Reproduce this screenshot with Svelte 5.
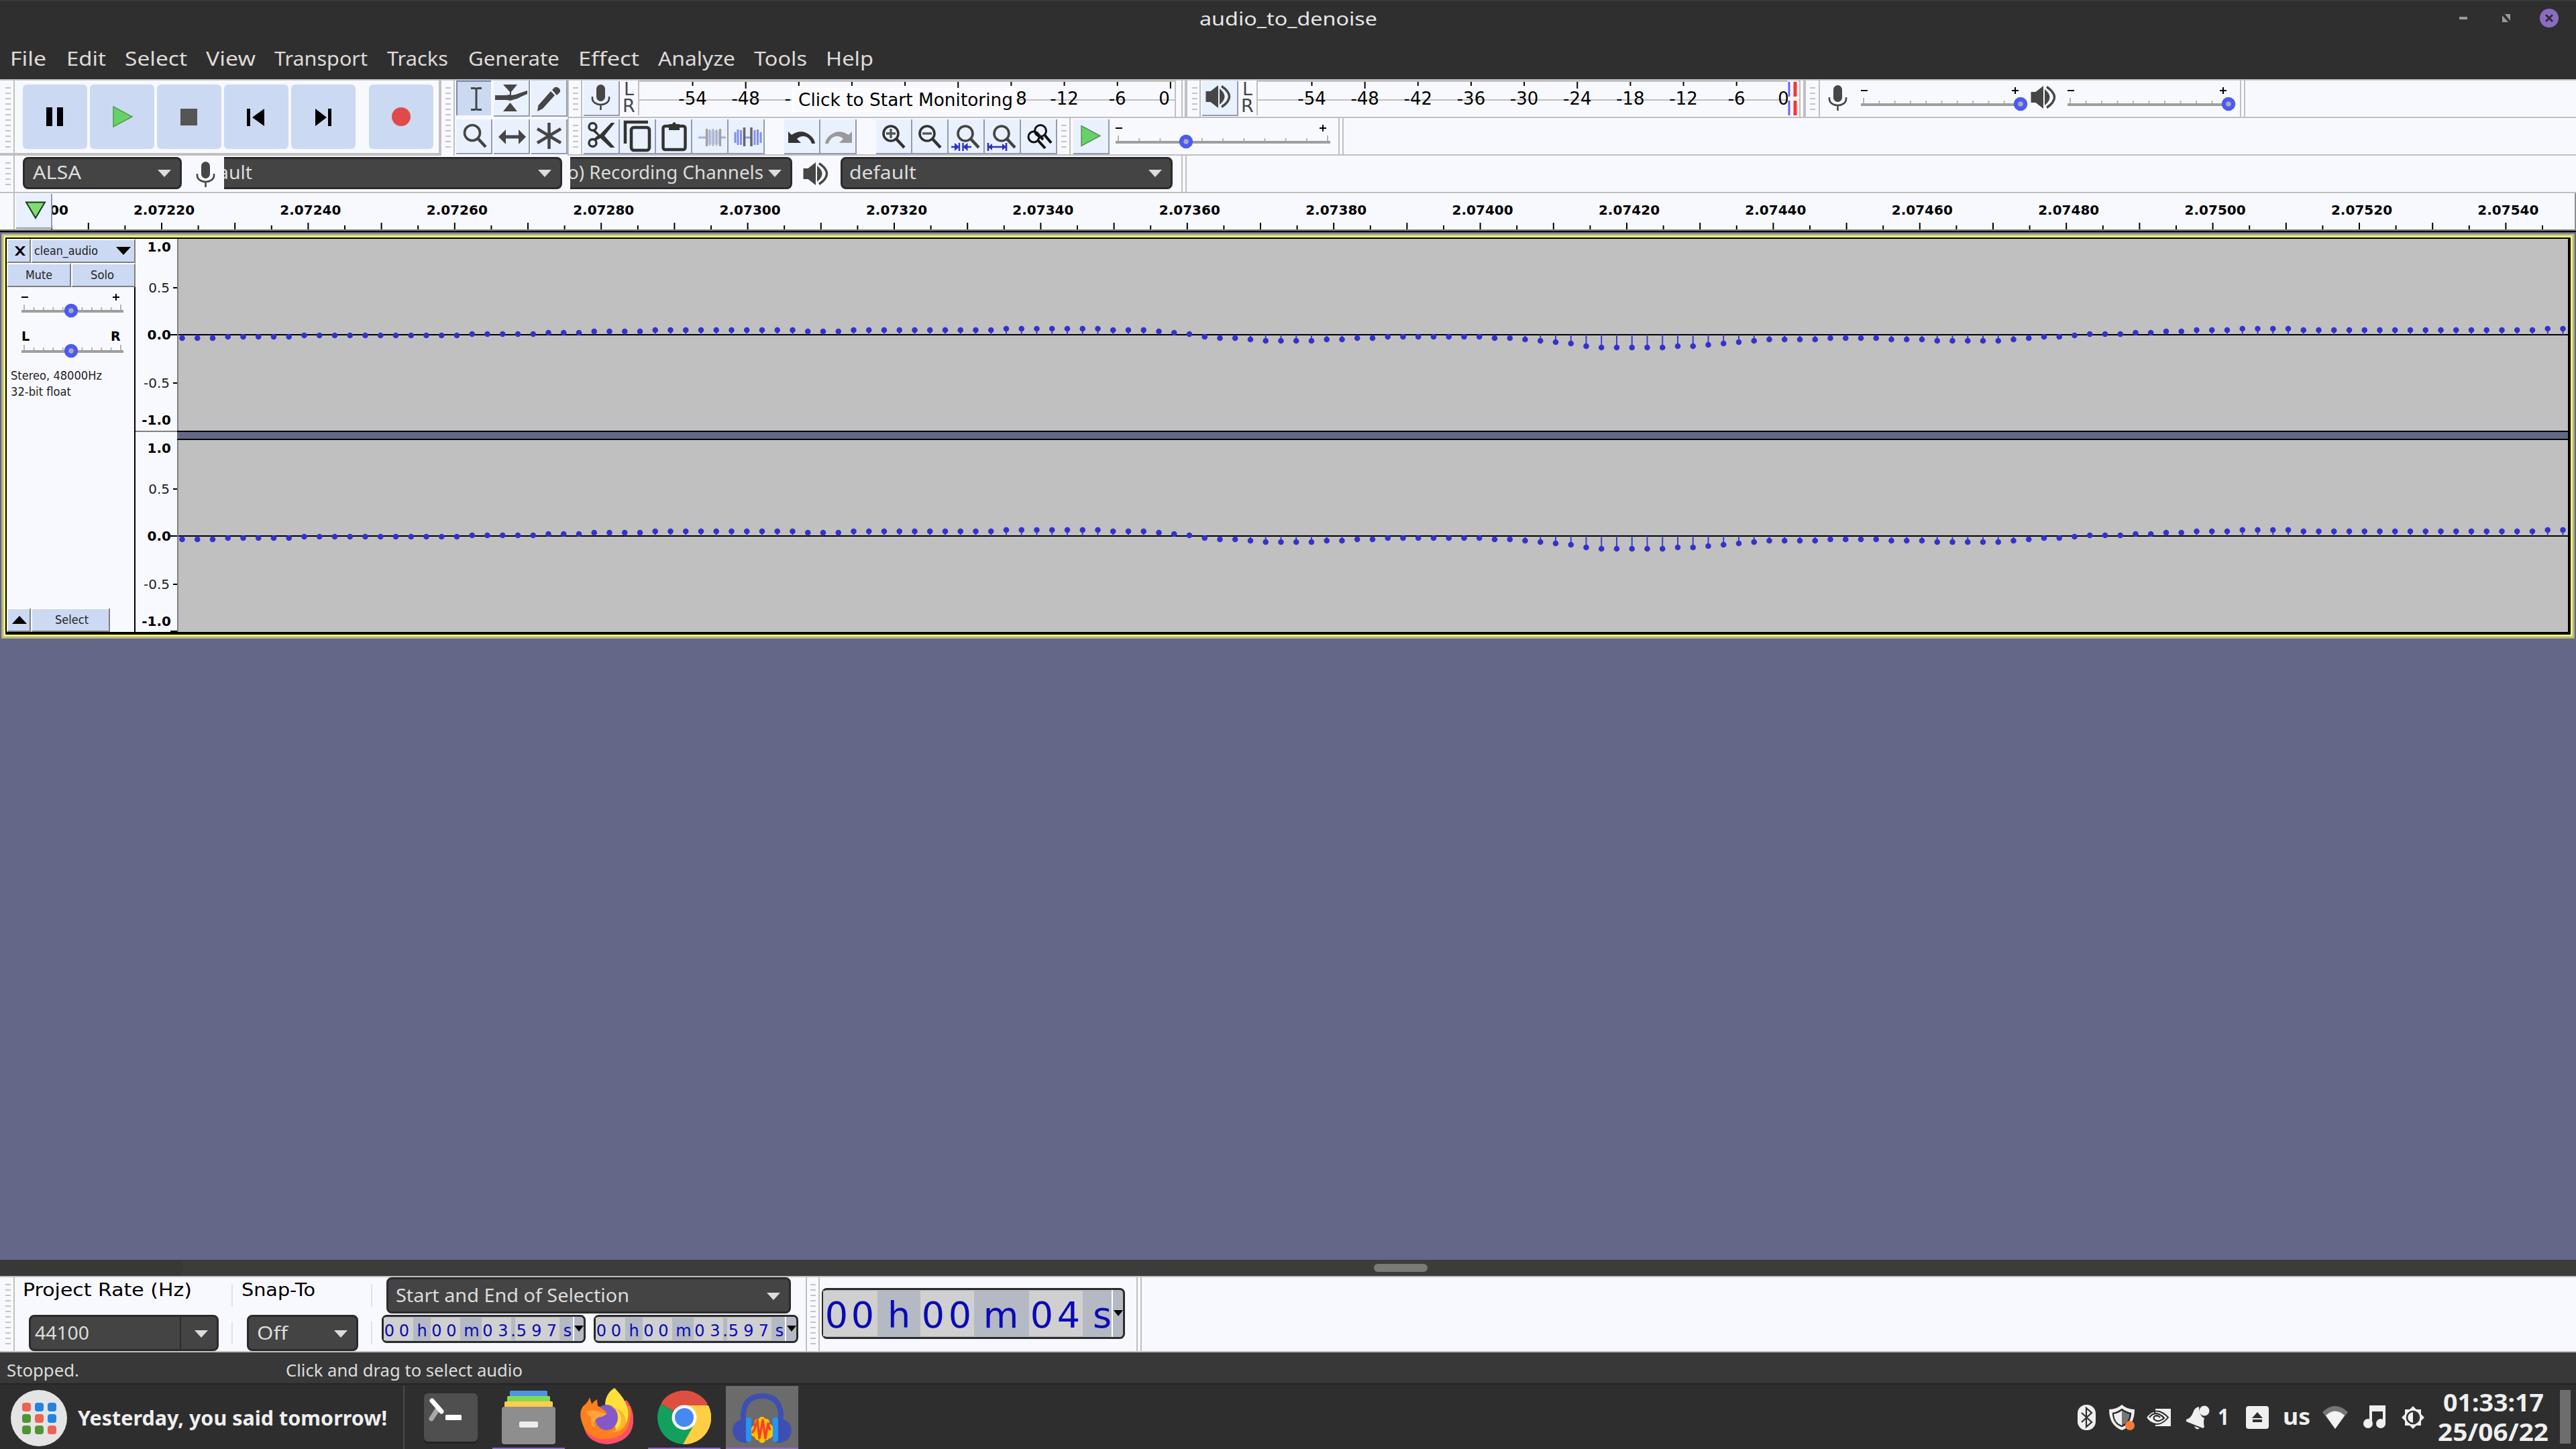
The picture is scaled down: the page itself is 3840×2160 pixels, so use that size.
<script>
  const menus = [
    ['File', 17, 50], ['Edit', 101, 55], ['Select', 188, 89], ['View', 309, 70], ['Transport', 411, 135],
    ['Tracks', 579, 87], ['Generate', 700, 132], ['Effect', 864, 87], ['Analyze', 983, 111],
    ['Tools', 1126, 75], ['Help', 1233, 67]
  ].map(([text, x, w], i, all) => ({ text, w: w + 4, gap: i ? x - all[i - 1][1] - all[i - 1][2] - 4 : 15 }));

  const transport = ['pause', 'play', 'stop', 'prev', 'next', 'record'];
  const toolRows = [['ibeam', 'envelope', 'pencil'], ['zoom', 'shift', 'multi']];
  const editGroups = [
    ['cut', 'copy', 'paste', 'trim', 'silence'],
    ['undo', 'redo'],
    ['zoomin', 'zoomout', 'zoomsel', 'zoomfit', 'zoomtoggle']
  ];
  const db = ['-54', '-48', '-42', '-36', '-30', '-24', '-18', '-12', '-6', '0'];
  // the monitoring hint covers the middle of the recording scale
  const dbCovered = ['-54', '-48', '-', '', '', '', '8', '-12', '-6', '0'];
  const dbShift = { '-': -16.5, '8': 15 };

  const rulerTicks = Array.from({ length: 70 }, (_, i) => ({ x: 77.2 + i * 54.6, long: i % 2 === 1 })).filter((t) => t.x < 3836);
  const rulerLabels = Array.from({ length: 17 }, (_, i) => ({ x: 244.5 + i * 218.4, text: (2.0722 + i * 0.0002).toFixed(5) }));

  // run-length encoded sample heights: [level, count]
  const runs = [
    [17, 3], [16, 5], [15, 11], [14, 5], [13, 3], [12, 4], [11, 10], [12, 3], [11, 10], [10, 7], [11, 3], [12, 1],
    [13, 1], [14, 1], [16, 1], [17, 2], [18, 1], [19, 4], [18, 2], [17, 2], [16, 7], [17, 2], [18, 1], [19, 1],
    [20, 1], [21, 1], [23, 1], [24, 5], [23, 2], [22, 1], [21, 1], [20, 1], [19, 1], [18, 4], [17, 4], [18, 3],
    [19, 5], [18, 1], [17, 1], [16, 2], [15, 1], [14, 3], [13, 2], [12, 2], [11, 3], [10, 4], [11, 16], [10, 2]
  ];
  const samples = runs.flatMap(([v, n]) => Array(n).fill(v)).map((v, i) => ({ x: 5.5 + i * 22.75, y: 114 + v * 2 }));

  const smallTime = [
    ['0', 11.5], ['0', 33.5], ['h', 60], ['0', 82], ['0', 104], ['m', 134], ['0', 158], ['3', 181], ['.', 196],
    ['5', 208.5], ['9', 231], ['7', 253.5], ['s', 277]
  ];
  const smallCells = [[3, 44], [73, 44], [149, 44], [199, 66]];
  const bigTime = [['0', 22], ['0', 61], ['h', 115], ['0', 166], ['0', 206], ['m', 267], ['0', 328], ['4', 368], ['s', 418]];
  const bigCells = [[2, 81], [147, 80], [309, 80]];
  const grid = ['#ec6354', '#2383e2', '#2383e2', '#4f9534', '#ec6354', '#2383e2', '#4f9534', '#4f9534', '#ec6354'];
</script>

{#snippet label(text, w, size, cls)}
  <svg class="label {cls}" width={w} height={size * 1.3}>
    <text x="0" y={size * 1.01} font-size={size} textLength={w} lengthAdjust="spacingAndGlyphs">{text}</text>
  </svg>
{/snippet}

{#snippet grip(w, h, n, x)}
  <svg class="grip" width={w} height={h}>
    {#each Array(n) as _, i}
      <rect {x} y={10 + i * 8} width="8" height="2" fill="#c4c4c4" />
    {/each}
    <rect x={w - 2} y="0" width="2" height={h} fill="#c0c0c0" />
  </svg>
{/snippet}

{#snippet mic()}
  <rect x="19" y="5" width="13" height="25" rx="6.5" fill="#464646" />
  <path d="M13 23v3a12.500 9 0 0 0 25 0v-3M25.500 35v8" fill="none" stroke="#464646" stroke-width="2.600" />
{/snippet}

{#snippet speaker()}
  <path d="M5.500 15h7L24 6v34l-11.500-9h-7z" fill="#464646" />
  <path d="M26 11q15 12 0 24z" fill="#464646" />
  <path d="M29 7.500q23 15.500 0 31" fill="none" stroke="#464646" stroke-width="3.500" />
{/snippet}

{#snippet lens(cx, color)}
  <circle {cx} cy="21" r="11" fill="none" stroke={color} stroke-width="3.600" />
  <path d="M{cx + 8} 29L{cx + 20} 42" stroke={color} stroke-width="4.500" />
{/snippet}

{#snippet icon(name)}
  <svg class="icon" width="54" height="52" viewBox="0 0 54 52">
    {#if name === 'mic'}{@render mic()}
    {:else if name === 'speaker'}{@render speaker()}
    {:else if name === 'ibeam'}
      <path d="M22 11.500h6l2 1.500 2-1.500h6M22 43.500h6l2-1.500 2 1.500h6M30 12v31" fill="none" stroke="#464646" stroke-width="3" />
    {:else if name === 'envelope'}
      <path d="M14 6h21L26 17v5q8-1 15-4l9-3v5l-9 4q-6 4-13 5l-3 1-6-1H2v-7h16l6-1v-4zM24.500 33L35 46H14z" fill="#464646" />
    {:else if name === 'pencil'}
      <path d="M9 46l1.500-9L29 16l6 6-18 20zM31 14l4-4q5-1 8 4v3l-5 5z" fill="#464646" />
    {:else if name === 'zoom'}
      <circle cx="24" cy="20" r="11.500" fill="none" stroke="#464646" stroke-width="3.600" />
      <path d="M32 28l12 13" stroke="#464646" stroke-width="4.500" />
    {:else if name === 'shift'}
      <path d="M7 26l11-11v8.500h19V15l11 11-11 11v-8.500H18V37z" fill="#464646" />
    {:else if name === 'multi'}
      <path d="M26.500 5v39M9 14l35 21M44 14L9 35" stroke="#464646" stroke-width="4.500" />
    {:else if name === 'cut'}
      <circle cx="13.500" cy="11" r="5.500" fill="none" stroke="#333" stroke-width="3.400" />
      <circle cx="13.500" cy="35" r="5.500" fill="none" stroke="#333" stroke-width="3.400" />
      <path d="M16 14l8 9L41 5h5.500L31 24.500 46.500 42H40L25 28l-8 4-2-3 6-5-8-7z" fill="#333" />
    {:else if name === 'copy'}
      <path d="M8 36V4h34" fill="none" stroke="#333" stroke-width="4.500" />
      <rect x="17" y="12" width="27" height="34" rx="4" fill="none" stroke="#333" stroke-width="4.600" />
    {:else if name === 'paste'}
      <rect x="10.500" y="10" width="33" height="35" rx="3" fill="none" stroke="#333" stroke-width="4.400" />
      <path d="M19 7h5q3-6 6 0h5v9H19z" fill="#333" />
    {:else if name === 'trim'}
      <path d="M9 27h12M42 27h8" stroke="#a4b2dc" stroke-width="3" />
      <rect x="23" y="17" width="17" height="20" fill="#ccd3e8" />
      <path d="M26 15v24M31 14v26M36 15v24" stroke="#a9b2cf" stroke-width="2.400" />
      <path d="M21.500 14v26M41.500 14v26" stroke="#a2a2a2" stroke-width="3.400" />
    {:else if name === 'silence'}
      <path d="M24 27h11" stroke="#8a9ae8" stroke-width="3" />
      <path d="M10 19v16M14 15v23M18.500 16v22M39 16v22M43.500 15v23M48 19v16" stroke="#7f8ff0" stroke-width="3" />
      <path d="M23.500 12v28M34 12v28" stroke="#666" stroke-width="3.600" />
    {:else if name === 'undo' || name === 'redo'}
      <g transform={name === 'redo' ? 'translate(53 0) scale(-1 1)' : ''} fill={name === 'redo' ? '#9a9a9a' : '#333'}>
        <path d="M6 18l5 5q15-10 28 1 6 5 7 12h-5q-3-10-12-11-6 0-10 4l6 6H6z" />
      </g>
    {:else if name === 'zoomin'}{@render lens(22, '#333')}<path d="M15 21h14M22 14v14" stroke="#555" stroke-width="3.400" />
    {:else if name === 'zoomout'}{@render lens(22, '#333')}<path d="M15 21h14" stroke="#555" stroke-width="3.400" />
    {:else if name === 'zoomsel'}{@render lens(25, '#444')}
      <path d="M4 41h9M25 41h9M16 35v12M21.500 35v12" stroke="#2d31c4" stroke-width="2.400" /><path d="M9 35l7 6-7 6zM28.500 35l-7 6 7 6z" fill="#2d31c4" />
    {:else if name === 'zoomfit'}{@render lens(25, '#444')}
      <path d="M5 35v12M32 35v12M6 41h25" stroke="#2d31c4" stroke-width="2.600" /><path d="M5 41l6-5v10zM32 41l-6-5v10z" fill="#2d31c4" />
    {:else if name === 'zoomtoggle'}
      <circle cx="29" cy="17" r="8.500" fill="none" stroke="#111" stroke-width="3" />
      <circle cx="19" cy="26" r="8" fill="none" stroke="#111" stroke-width="3" />
      <path d="M35 23l10 12M25 31l11 12M23 20l10 10" stroke="#111" stroke-width="4" />
    {:else if name === 'play'}
      <path d="M12 9.500v30L40 24.500z" fill="#66d266" stroke="#58905a" stroke-width="1.500" />
    {/if}
  </svg>
{/snippet}

{#snippet slider(w, value, marks)}
  <svg class="slider" width={w} height="54">
    {#if marks}
      <text x="0" y="20" class="mark">L</text>
      <text x={w - 19} y="20" class="mark">R</text>
    {:else}
      <path d="M0 15h10M{w - 16} 15h10M{w - 11} 10v10" stroke="#000" stroke-width="2" />
    {/if}
    {#each Array(11) as _, i}
      {@const long = i === 0 || i === 10}
      <rect x={1 + (i * (w - 8)) / 10} y={long ? 26 : 30} width="2" height="8" fill="#fff" />
      <rect x={3 + (i * (w - 8)) / 10} y={long ? 26 : 30} width="2" height="8" fill="#b4b4b4" />
    {/each}
    <rect x="0" y="34" width={w} height="4" fill="#9e9e9e" />
    <circle cx={value} cy="35" r="7" fill="#aab" stroke="#4c5aee" stroke-width="6.500" />
  </svg>
{/snippet}

{#snippet meter(start, w, values)}
  <svg class="meter" width={w} height="54">
    <rect width={w} height="2" fill="#c0c0c0" />
    <rect x="0" y="28" width={w} height="2" fill="#c0c0c0" />
    <rect x="0" y="0" width="2" height="52" fill="#c0c0c0" />
    {#each values as value, i}
      {@const x = start + i * 79.15}
      <rect {x} y="2" width="2" height={[1, 5, 9].includes(i) ? 10 : 6} fill="#000" />
      {#if value}
        <text x={x + (i < 9 ? 1 : 0) + (dbShift[value] ?? 0)} y="36" text-anchor={i < 9 ? 'middle' : 'end'}>{value}</text>
      {/if}
    {/each}
  </svg>
{/snippet}

{#snippet arrow()}
  <svg class="arrow" width="20" height="11"><path d="M0 0h20L10 11z" fill="#dcdcdc" /></svg>
{/snippet}

{#snippet timeBox(w, h, cells, chars, size, base, split)}
  <svg class="time" width={w} height={h}>
    <rect x="1.500" y="1.500" width={w - 3} height={h - 3} rx="6" fill="#b4b9c3" stroke="#2b2b2b" stroke-width="3" />
    {#each cells as [x, cw]}
      <rect {x} y="4" width={cw} height={h - 8} fill="#d0d0d0" />
    {/each}
    <rect x={split} y="3" width="2" height={h - 6} fill="#fff" />
    {#each chars as [c, x]}
      <text {x} y={base} font-size={size} text-anchor="middle">{c}</text>
    {/each}
    <path d="M{w - 17} {h / 2 - 5}h14l-7 9z" fill="#000" />
  </svg>
{/snippet}

<div class="screen">
  <header>
    <div class="titlebar">
      <span></span>
      {@render label('audio_to_denoise', 265, 28, 'title')}
      <svg class="winbtns" width="180" height="54">
        <rect x="6" y="26" width="12" height="4" fill="#9b9b9b" />
        <path d="M70 24v10h9zM74 22h8v10z" fill="#9b9b9b" />
        <circle cx="140" cy="28" r="14" fill="#8c6bc4" />
        <path d="M135 23l10 10M145 23l-10 10" stroke="#2f2f2f" stroke-width="3" />
      </svg>
    </div>
    <nav>
      {#each menus as m}
        <svg width={m.gap} height="2"></svg>{@render label(m.text, m.w, 29, 'menu')}
      {/each}
    </nav>
  </header>

  <section class="dock">
    <div class="band">
      <div class="transport">
        {@render grip(22, 108, 12, 8)}
        {#each transport as t}
          <button class={['tbtn', t]} aria-label={t}>
            <svg width="96" height="96" viewBox="0 0 96 96">
              {#if t === 'pause'}<path d="M35 34h9v28h-9zM51 34h9v28h-9z" />
              {:else if t === 'play'}<path d="M35 33v30l28-15z" fill="#66d266" stroke="#4f9c52" stroke-width="1.500" />
              {:else if t === 'stop'}<path d="M35 36h25v25H35z" fill="#555" />
              {:else if t === 'prev'}<path d="M34 36h5v26h-5zM60 36v26L42 49z" />
              {:else if t === 'next'}<path d="M55 36h5v26h-5zM36 36v26l17-13z" />
              {:else}<circle cx="48" cy="48" r="14" fill="#e14a4a" />{/if}
            </svg>
          </button>
        {/each}
      </div>
      <div class="tools">
        {@render grip(20, 112, 12, 6)}
        <div class="toolgrid">
          {#each toolRows as row}
            {#each row as t}<button class={['ibtn', { on: t === 'ibeam' }]} aria-label={t}>{@render icon(t)}</button>{/each}
          {/each}
        </div>
      </div>
      <div class="rows">
        <div class="row">
          {@render grip(20, 54, 5, 6)}
          <button class="ibtn lone" aria-label="mic">{@render icon('mic')}</button>
          <div class="lr"><span>L</span><span>R</span></div>
          <div class="meterwrap">
            {@render meter(80.5, 800, dbCovered)}
            <div class="tip">{@render label('Click to Start Monitoring', 320, 26, 'tiptext')}</div>
          </div>
          <div class="gap10"></div>
          <div class="bar4"></div>
          {@render grip(20, 54, 5, 7)}
          <button class="ibtn lone" aria-label="speaker">{@render icon('speaker')}</button>
          <div class="lr"><span>L</span><span>R</span></div>
          <div class="meterwrap">
            {@render meter(81.5, 809, db)}
            <svg class="levels" width="16" height="52">
              <path d="M2 2v22M2 30v22" stroke="#6464ff" stroke-width="3" />
              <path d="M11 2v22M11 30v22" stroke="#ff3232" stroke-width="5" />
            </svg>
          </div>
          <div class="gap6"></div>
          <div class="bar4"></div>
          {@render grip(21, 54, 5, 6)}
          <div class="mixicon">{@render icon('mic')}</div>
          {@render slider(241, 238, false)}
          <div class="mixicon second">{@render icon('speaker')}</div>
          {@render slider(243, 240, false)}
          <div class="endcap"></div>
        </div>
        <div class="row edit">
          {@render grip(20, 54, 5, 6)}
          {#each editGroups as group}
            <div class="group">
              {#each group as t}<button class="ibtn" aria-label={t}>{@render icon(t)}</button>{/each}
            </div>
          {/each}
          {@render grip(20, 54, 5, 6)}
          <button class="ibtn playat" aria-label="play at speed">{@render icon('play')}</button>
          {@render slider(320, 105, false)}
          <div class="endcap speed"></div>
        </div>
      </div>
    </div>
    <div class="row devices">
      {@render grip(22, 54, 5, 8)}
      <div class="combo host">{@render label('ALSA', 72, 27, 'light')}{@render arrow()}</div>
      <div class="devicon">{@render icon('mic')}</div>
      <div class="combo recdev">{@render label('ault', 51, 27, 'light')}{@render arrow()}</div>
      <div class="combo channels">{@render label('o) Recording Channels', 292, 27, 'light')}{@render arrow()}</div>
      <div class="devicon spk">{@render icon('speaker')}</div>
      <div class="combo playdev">{@render label('default', 100, 27, 'light')}{@render arrow()}</div>
      <div class="endcap dev"></div>
    </div>
    <div class="timeline">
      <svg width="3838" height="54">
        <rect x="20" y="0" width="2" height="54" fill="#c0c0c0" />
        <text x="74" y="32">00</text>
        {#each rulerLabels as l}<text x={l.x} y="32" text-anchor="middle">{l.text}</text>{/each}
        {#each rulerTicks as t}<rect x={t.x - 1} y={t.long ? 44 : 48} width="2" height="10" />{/each}
        <rect x="24" y="1" width="54" height="52" fill="#949ab4" />
        <rect x="24" y="1" width="52" height="50" fill="#eaf1fe" />
        <path d="M39 13.500h28L53 37z" fill="#7ddd72" stroke="#1c381c" stroke-width="2" />
      </svg>
    </div>
  </section>

  <main>
    <div class="track">
      <aside>
        <div class="prow">
          <button class="pbtn close" aria-label="close track"><svg width="18" height="14"><path d="M1 0h4l4 4.500L13 0h4l-6 7 6 7h-4l-4-4.500L5 14H1l6-7z" /></svg></button>
          <button class="pbtn name">{@render label('clean_audio', 95, 17, 'dj')}<svg width="22" height="12"><path d="M0 0h22L11 12z" /></svg></button>
        </div>
        <div class="prow">
          <button class="pbtn half">{@render label('Mute', 40, 17, 'dj')}</button>
          <button class="pbtn half solo">{@render label('Solo', 35, 17, 'dj')}</button>
        </div>
        <div class="pslider">{@render slider(152, 74, false)}</div>
        <div class="pslider">{@render slider(152, 74, true)}</div>
        <div class="info">
          {@render label('Stereo, 48000Hz', 136, 17, 'dj')}
          {@render label('32-bit float', 90, 17, 'dj')}
        </div>
        <div class="prow foot">
          <button class="pbtn up" aria-label="collapse"><svg width="22" height="12"><path d="M0 12h22L11 0z" /></svg></button>
          <button class="pbtn sel">{@render label('Select', 50, 17, 'dj')}</button>
        </div>
      </aside>
      <div class="channels-col">
        {#each [0, 1] as ch}
          <div class="channel">
            <svg class="vruler" width="64" height="286">
              <text x="53" y="19" class="b">1.0</text>
              <text x="51" y="80">0.5</text>
              <text x="53" y="150" class="b">0.0</text>
              <text x="51" y="222">-0.5</text>
              <text x="53" y="277" class="b">-1.0</text>
              <path d="M56 73h6M52 143h10M56 215h6" stroke="#000" stroke-width="2" />
              {#if ch === 1}<path d="M52 285h10" stroke="#000" stroke-width="2" />{/if}
              <rect x="62" y="0" width="2" height="286" fill="#808080" />
            </svg>
            <svg class="wave" width="3562" height="286">
              <rect y="142" width="3562" height="2" />
              {#each samples as s}
                <path d="M{s.x} 143V{s.y}" stroke="#4040d0" stroke-width="2" />
                <circle cx={s.x} cy={s.y} r="4.3" fill="#3333cc" />
              {/each}
            </svg>
          </div>
          {#if ch === 0}
            <div class="split"><div class="splitleft"></div><div class="splitright"></div></div>
          {/if}
        {/each}
      </div>
    </div>
  </main>

  <div class="scroll"><div class="thumb"></div></div>

  <section class="bottom">
    {@render grip(22, 110, 12, 8)}
    <div class="field rate">
      {@render label('Project Rate (Hz)', 252, 26, 'dark')}
      <div class="combo tall ratebox">{@render label('44100', 81, 27, 'light')}<span class="div"></span>{@render arrow()}</div>
    </div>
    <div class="seps"><i></i><i></i></div>
    <div class="field snap">
      {@render label('Snap-To', 110, 26, 'dark')}
      <div class="combo tall snapbox">{@render label('Off', 46, 27, 'light')}{@render arrow()}</div>
    </div>
    <div class="seps"><i></i><i></i></div>
    <div class="selection">
      <div class="combo tall range">{@render label('Start and End of Selection', 348, 27, 'light')}{@render arrow()}</div>
      <div class="times">
        {@render timeBox(304, 42, smallCells, smallTime, 24, 32, 285)}
        {@render timeBox(305, 42, smallCells, smallTime, 24, 32, 285)}
      </div>
    </div>
    <div class="bar2"></div>
    {@render grip(19, 110, 12, 5)}
    <div class="big">{@render timeBox(452, 76, bigCells, bigTime, 54, 58.500, 432)}</div>
    <div class="endcap tall"></div>
  </section>

  <footer class="status">
    {@render label('Stopped.', 108, 26, 'light')}
    {@render label('Click and drag to select audio', 353, 26, 'light hint')}
  </footer>

  <footer class="panel">
    <svg class="start" width="84" height="84">
      <circle cx="42" cy="42" r="42" fill="#e4e4e4" />
      {#each grid as fill, i}
        <rect x={17 + (i % 3) * 19} y={19 + Math.floor(i / 3) * 17} width="13" height="13" rx="4" {fill} />
      {/each}
    </svg>
    {@render label('Yesterday, you said tomorrow!', 461, 30, 'bold quote')}
    <div class="psep"></div>
    <div class="app">
      <svg width="108" height="94">
        <rect x="14" y="12" width="80" height="74" rx="6" fill="#232323" />
        <rect x="14" y="11" width="80" height="72" rx="6" fill="#4f4f4f" />
        <path d="M25 49l9-14" stroke="#a8a8a8" stroke-width="7" stroke-linecap="round" />
        <path d="M26 22l14 16" stroke="#fff" stroke-width="7" stroke-linecap="round" />
        <rect x="46" y="43" width="24" height="8" rx="1.500" fill="#fff" />
      </svg>
    </div>
    <div class="app open files">
      <svg width="108" height="92">
        <rect x="26" y="7" width="56" height="12" rx="2" fill="#4f93e0" />
        <rect x="22" y="15" width="64" height="12" rx="2" fill="#82dc53" />
        <rect x="18" y="23" width="72" height="12" rx="2" fill="#ffcc50" />
        <rect x="14" y="32" width="80" height="57" rx="4" fill="#232323" />
        <rect x="14" y="31" width="80" height="56" rx="4" fill="#8e8e8e" />
        <rect x="40" y="53" width="28" height="9" rx="2" fill="#ececec" />
      </svg>
    </div>
    <div class="app firefox">
      <svg width="80" height="86">
        <path d="M70 18q12 16 10 34-3 28-38 32Q10 82 6 56z" fill="#fb4f66" />
        <path d="M15 14q2 6 3 10 3-4 8-7l1 10 11 4 38-4q3 40-24 47Q24 82 8 62-6 34 9 24q4-4 6-10z" fill="#ff7f1e" />
        <path d="M52 0q18 18 20 33 3 24-17 32l-8-30-9-11Q39 8 52 0z" fill="#ffdf3a" />
        <ellipse cx="40" cy="44" rx="17" ry="19" fill="#8458c8" />
        <path d="M47 29q16 4 15 20-3 17-20 17 24 1 27-14 0-20-22-23z" fill="#ffb52e" />
        <path d="M10 36q4-5 16-2l15 4q-5 5-13 6-9 4-5 16-9-5-5-17-6-1-8-7z" fill="#ffa436" />
        <path d="M12 28q14-5 28 8l-3 2Q24 32 11 34z" fill="#ff7f1e" />
      </svg>
    </div>
    <div class="app open chrome">
      <svg width="80" height="84">
        <circle cx="40" cy="41" r="40" fill="#202020" />
        <path d="M40 40L5.400 20A40 40 0 0 1 75 20z" fill="#dd4f40" />
        <path d="M40 40L5.400 20A40 40 0 0 0 38 80l20-34z" fill="#12a05c" />
        <path d="M40 22h36A40 40 0 0 1 38 80l18-32z" fill="#ffce42" />
        <path d="M6 18Q12 8 24 3l16 19h35L60 10z" fill="#dd4f40" />
        <circle cx="40" cy="40" r="18.500" fill="#fff" /><circle cx="40" cy="40" r="14" fill="#4689f3" />
      </svg>
    </div>
    <div class="app open active">
      <svg width="108" height="92">
        <path d="M26 54V42q2-27 28-27t28 27v12" fill="none" stroke="#3e4fb4" stroke-width="8" />
        <path d="M32 49v36q-22-1-22-20 2-16 22-16zM76 49v36q22-1 22-20-2-16-22-16z" fill="#3e4fb4" />
        <rect x="30" y="47" width="8" height="36" rx="3" fill="#2196f3" /><rect x="70" y="47" width="8" height="36" rx="3" fill="#2196f3" />
        <path d="M43 64v7M48 54v22M54 51v29M60 54v22M65 62v11" stroke="#ffc107" stroke-width="10" stroke-linecap="round" />
        <path d="M39 70l3-4 5-15 3 27 5-27 4 27 4-22 3 10" fill="none" stroke="#f8402c" stroke-width="3.400" stroke-linejoin="round" />
      </svg>
    </div>
    <div class="tray">
      <svg class="bt" width="27" height="38"><rect width="27" height="38" rx="13" fill="#efefef" /><path d="M6 12l15 14-8 7V5l8 7L6 26" fill="none" stroke="#2e2e2e" stroke-width="2.200" /></svg>
      <svg width="40" height="38"><path d="M19 0q8 7 19 7 0 24-19 31Q0 31 0 7q11 0 19-7z" fill="#efefef" /><path d="M19 7q7 5 13 6-1 15-13 19Q7 28 6 13q7-1 13-6z" fill="#777" stroke="#2e2e2e" stroke-width="2.400" /><path d="M19 9v22Q8 27 7 14q7-1 12-5z" fill="#efefef" /><circle cx="31" cy="31" r="7" fill="#fa7a3c" /></svg>
      <svg class="nv" width="38" height="28"><rect x="14" y="1" width="23" height="26" fill="#efefef" /><path d="M0 14Q8 2 20 5q8 3 13 9-8 10-17 10Q5 23 0 14z" fill="#efefef" stroke="#2e2e2e" stroke-width="2" /><path d="M5 14q6-8 14-5 5 2 8 6-6 5-11 4-6-2-4-6 4-4 9 1M13 4v5" fill="none" stroke="#2e2e2e" stroke-width="2.200" /></svg>
      <svg class="bell" width="36" height="36"><path d="M19 2q-7 1-9 9Q7 19 0 21v3l25 10 2-2q-2-7 0-13-8-3-8-17zM12 31l8 3q-5 4-8-3z" fill="#efefef" /><circle cx="27" cy="8" r="7.500" fill="#efefef" /></svg>
      {@render label('1', 17, 34, 'bold one')}
      <svg class="eject" width="34" height="34"><rect width="34" height="34" rx="4" fill="#efefef" /><path d="M17 9l8 9H9zM10 20h14v4H10z" fill="#2e2e2e" /></svg>
      {@render label('us', 41, 34, 'bold us')}
      <svg class="wifi" width="38" height="34"><path d="M0 9Q19-9 38 9L19 34z" fill="#757575" /><path d="M5 14q14-13 28 0L19 34z" fill="#f2f2f2" /></svg>
      <svg class="music" width="33" height="35"><path d="M9 0h24v29h-4V9H13v20H9z" fill="#efefef" /><ellipse cx="7" cy="27" rx="7" ry="7" fill="#efefef" /><ellipse cx="26" cy="27" rx="7" ry="7" fill="#efefef" /></svg>
      <svg class="sun" width="34" height="34"><path d="M17 0l5 5h7v7l5 5-5 5v7h-7l-5 5-5-5H5v-7l-5-5 5-5V5h7z" fill="#efefef" /><circle cx="17" cy="17" r="9" fill="#efefef" stroke="#2e2e2e" stroke-width="2.600" /><path d="M17 9a8 8 0 0 1 0 16z" fill="#2e2e2e" /></svg>
    </div>
    <div class="clock">
      {@render label('01:33:17', 150, 35, 'bold')}
      {@render label('25/06/22', 165, 35, 'bold')}
    </div>
    <div class="desk"></div>
  </footer>
</div>

<style>
  :global(body) { margin: 0; overflow: hidden; background: #2e2e2e; }
  .screen { width: 3840px; height: 2160px; display: flex; flex-direction: column; overflow: hidden; font-family: 'Noto Sans', sans-serif; }
  svg { display: block; flex: none; }
  button { border: 0; padding: 0; margin: 0; background: none; display: block; flex: none; }
  .label { overflow: visible; }
  .title text { fill: #e6e6e6; }
  .menu text { fill: #dfdad8; }
  .light text { fill: #dcdcdc; }
  .dark text, .tiptext text { font-family: 'DejaVu Sans', sans-serif; fill: #000; }
  .dj text { font-family: 'DejaVu Sans', sans-serif; fill: #222; }
  .bold text { font-weight: 700; fill: #efefef; }

  header { height: 116px; flex: none; background: #2f2f2f; border-top: 2px solid #383838; }
  .titlebar { height: 52px; display: grid; grid-template-columns: 1fr auto 1fr; align-items: center; }
  .winbtns { justify-self: end; margin-top: -4px; }
  nav { display: flex; align-items: center; height: 67px; }

  .dock { flex: none; height: 224px; border-top: 2px solid #c0c0c0; background: #f8f9ff; }
  .band { display: flex; height: 112px; }
  .transport { display: flex; width: 654px; height: 108px; border-right: 4px solid #c0c0c0; border-bottom: 4px solid #c0c0c0; }
  .tbtn { width: 96px; height: 96px; margin: 6px 4px 0 0; border-radius: 6px; background: #ccd9f2; }
  .tbtn.pause { margin-left: 12px; }
  .tbtn.record { margin-left: 16px; }
  .tools { display: flex; width: 188px; border-right: 2px solid #c0c0c0; }
  .toolgrid { display: grid; grid-template-columns: repeat(3, 54px); grid-template-rows: 54px 52px; gap: 4px 2px; margin-left: 2px; }
  .ibtn { width: 52px; height: 50px; background: #eaf1fe; border-right: 2px solid #949ab0; border-bottom: 2px solid #949ab0; box-sizing: content-box; }
  .toolgrid .ibtn:nth-child(-n + 3) { height: 52px; }
  .toolgrid .ibtn:nth-child(n + 4) { height: 50px; }
  .ibtn.on { background: #ccd9f2; box-shadow: inset 2px 2px #8088a8; border-color: #f8f9ff; }
  .rows { flex: 1; }
  .row { display: flex; height: 54px; border-bottom: 2px solid #c0c0c0; }
  .lone { margin: 1px 0 0 2px; }
  .lr { width: 27px; height: 54px; display: flex; flex-direction: column; align-items: center; font: 27px/28px 'DejaVu Sans', sans-serif; color: #464646; }
  .lr span:last-child { line-height: 26px; }
  .lr span:first-child { line-height: 25px; }
  .meter text { font: 26px 'DejaVu Sans', sans-serif; }
  .meterwrap { position: relative; border-right: 2px solid #c0c0c0; }
  .tip { position: absolute; left: 230px; top: 11px; width: 330px; padding-left: 4px; height: 36px; background: #fbfbff; box-shadow: inset 0 0 0 2px #fff; display: flex; align-items: center; justify-content: center; }
  .levels { position: absolute; right: 1px; top: 0; background: #f8f9ff; }
  .gap10 { width: 8px; border-right: 2px solid #c0c0c0; margin-right: 3px; }
  .gap6 { width: 4px; }
  .bar4 { width: 4px; background: #c0c0c0; }
  .bar2 { width: 2px; background: #c0c0c0; margin-left: 11px; }
  .mixicon { width: 60px; margin: 2px 0 0 1px; height: 50px; }
  .mixicon.second { margin-left: 7px; }
  .slider { overflow: visible; }
  .mark { font: 700 19px 'DejaVu Sans', sans-serif; }
  .endcap { width: 4px; margin-left: 14px; border-left: 2px solid #c0c0c0; border-right: 2px solid #c0c0c0; }
  .edit .group { display: flex; margin: 2px 29px 0 2px; }
  .edit .group:nth-of-type(2) { margin-left: 0; }
  .edit .group:nth-of-type(3) { margin: 2px 0 0 0; }
  .playat { margin: 2px 9px 0 4px; }
  .speed { margin-left: 12px; }

  .combo { box-sizing: border-box; height: 48px; margin-top: 2px; background: #444; border: 3px solid #2b2b2b; border-radius: 8px; display: flex; align-items: center; justify-content: space-between; overflow: hidden; flex: none; padding: 0 13px 0 12px; }
  .host { width: 237px; margin-left: 12px; }
  .devicon { width: 53px; margin: 4px 0 0 10px; height: 50px; }
  .recdev { width: 504px; border-left: 0; border-radius: 0 8px 8px 0; padding-left: 0; }
  .recdev :global(.label) { margin-left: -9px; }
  .channels { width: 331px; margin-left: 12px; border-left: 0; border-radius: 0 8px 8px 0; padding: 0 13px 0 0; justify-content: flex-end; gap: 7px; }
  .devicon.spk { width: 61px; margin-left: 11px; }
  .playdev { width: 495px; padding-left: 10px; }
  .dev { margin-left: 13px; }
  .timeline { height: 54px; border-bottom: 2px solid #808080; border-right: 2px solid #8c8c8c; font: 700 20px 'DejaVu Sans', sans-serif; }

  main { height: 1530px; flex: none; background: #646787; border-top: 2px solid #000; padding: 2px 2px 0; display: flex; align-items: flex-start; }
  .track { display: flex; width: 3818px; height: 586px; padding: 8px 10px 10px 8px; background: #000; box-shadow: inset 0 0 0 2px #acac80, inset 0 0 0 4px #d0d082, inset 0 0 0 6px #fdfd7c; }
  aside { width: 190px; background: #f8f9ff; border-right: 2px solid #000; display: flex; flex-direction: column; }
  .prow { display: flex; height: 36px; }
  .pbtn { box-sizing: border-box; height: 36px; background: #ccd9f2; border: 2px solid #fff; border-right-color: #808080; border-bottom-color: #808080; display: flex; align-items: center; justify-content: center; }
  .close { width: 36px; }
  .close svg { margin-left: 4px; }
  .name { width: 156px; gap: 27px; margin-right: -2px; padding-right: 3px; }
  .half { width: 96px; }
  .solo { margin-right: -2px; padding-right: 3px; }
  .pslider { height: 60px; padding-left: 22px; }
  .info { padding: 0 0 0 6px; display: flex; flex-direction: column; gap: 2px; margin-top: 1px; }
  .foot { margin-top: auto; }
  .up { width: 36px; padding-left: 2px; }
  .sel { width: 118px; padding-left: 4px; }
  .channel { display: flex; height: 286px; background: #c0c0c0; }
  .vruler { background: #f8f9ff; font: 20px 'DejaVu Sans', sans-serif; }
  .vruler text { text-anchor: end; fill: #222; }
  .vruler .b { font-weight: 700; fill: #000; }
  .split { display: flex; height: 14px; }
  .splitleft { width: 62px; height: 12px; background: #f8f9ff; border-top: 2px solid #808080; }
  .splitright { flex: 1; height: 10px; background: #646787; border-top: 2px solid #000; border-bottom: 2px solid #000; }

  .scroll { height: 24px; flex: none; background: linear-gradient(90deg, #383838 272px, #3c3c3c 272px); display: flex; align-items: center; }
  .thumb { margin-left: 2048px; width: 80px; height: 12px; border-radius: 6px; background: #7a7a7a; }

  .bottom { display: flex; height: 110px; flex: none; border-top: 2px solid #c0c0c0; border-bottom: 2px solid #c0c0c0; background: #f8f9ff; }
  .field { display: flex; flex-direction: column; }
  .field > :global(svg) { margin: 2px 0 20px 0; height: 34px; }
  .rate { width: 311px; margin-left: 12px; }
  .combo.tall { height: 54px; margin-top: 0; padding-top: 2px; }
  .ratebox { width: 283px; margin-left: 9px; padding-left: 6px; }
  .div { width: 2px; height: 54px; background: #2b2b2b; margin-left: 115px; }
  .seps { width: 2px; display: flex; flex-direction: column; gap: 22px; padding-top: 10px; }
  .seps i { width: 2px; height: 34px; background: #e0e2ea; }
  .snap { width: 193px; margin-left: 13px; }
  .snapbox { width: 166px; margin-left: 8px; }
  .selection { margin-left: 14px; }
  .range { width: 603px; margin-left: 7px; padding-left: 11px; }
  .times { display: flex; gap: 12px; margin-top: 2px; }
  .time text { font-family: 'DejaVu Sans', sans-serif; fill: #0a0ab8; }
  .big { margin: 16px 0 0 3px; }
  .endcap.tall { margin-left: 17px; }

  .status { display: flex; align-items: center; height: 46px; flex: none; background: #383838; border-bottom: 2px solid #242424; padding-left: 10px; }
  .status :global(.label) { margin-top: 7px; }
  .hint { margin-left: 308px; }

  .panel { flex: 1; display: flex; background: #2e2e2e; align-items: flex-start; }
  .start { margin: 8px 0 0 16px; }
  .quote { margin: 31px 0 0 16px; }
  .psep { width: 2px; height: 94px; margin: 2px 0 0 24px; background: #4a4a4a; }
  .app { height: 92px; margin: 2px 0 0 15px; border-bottom: 2px solid transparent; }
  .app.open { border-bottom-color: #8e6bc5; }
  .app.files { margin-left: 8px; }
  .app.firefox { margin: 5px 22px 0 22px; height: 89px; }
  .app.chrome { margin-left: 0; padding: 7px 14px 0; margin-top: 2px; height: 85px; }
  .chrome svg { height: 85px; }
  .app.active { background: #6b6b6b; margin-left: 8px; }
  .tray { display: flex; align-items: center; margin: 0 0 0 auto; height: 97px; }
  .bt { margin-right: 20px; }
  .nv { margin-left: 15px; margin-right: 22px; }
  .one { margin: 0 25px 0 11px; }
  .us { margin: 0 18px 0 21px; }
  .wifi { margin-right: 23px; }
  .music { margin-right: 24px; }
  .clock { display: flex; flex-direction: column; align-items: center; margin: 5px 17px 0 20px; }
  .clock :global(.label) { height: 44px; }
  .desk { width: 16px; height: 80px; margin: 8px 8px 0 0; background: #6d6d6d; }
</style>
